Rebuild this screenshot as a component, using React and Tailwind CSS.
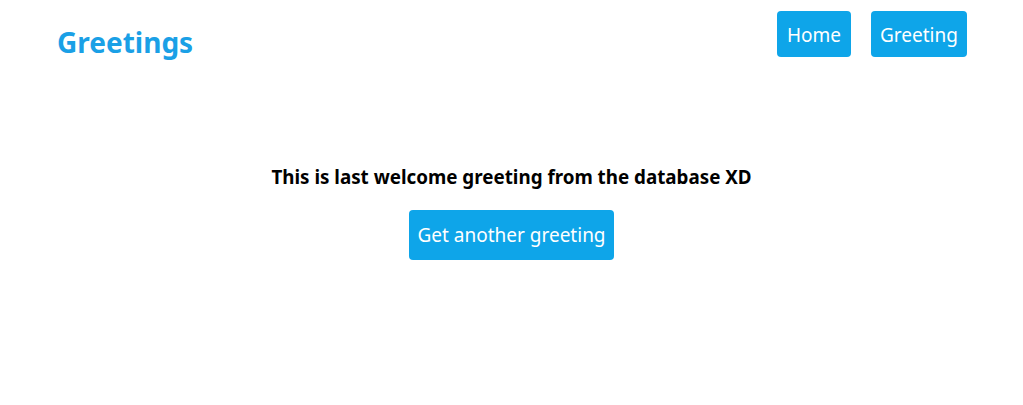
import React, { useState } from 'react';

const greetings = [
  'This is last welcome greeting from the database XD',
];

export default function App() {
  const [idx, setIdx] = useState(0);

  return (
    <div className="min-h-screen bg-white font-['Noto_Sans',sans-serif]">
      <header className="flex items-start justify-between pl-[57px] pr-[56px] pt-[11px]">
        <h1 className="mt-[14px] text-[28px] font-bold leading-[34px] text-[#1aa0e6]">Greetings</h1>
        <nav className="flex gap-5">
          <button className="h-[46px] w-[74px] rounded-[4px] bg-[#0ea5e9] pt-[3px] text-[19px] text-white">Home</button>
          <button className="h-[46px] w-[96px] rounded-[4px] bg-[#0ea5e9] pt-[3px] text-[19px] text-white">Greeting</button>
        </nav>
      </header>

      <main className="mt-[104px] flex flex-col items-center">
        <p className="text-[18.8px] font-bold leading-[28px] text-black">{greetings[idx % greetings.length]}</p>
        <button
          onClick={() => setIdx((i) => i + 1)}
          className="mt-[19px] h-[50px] w-[205px] rounded-[4px] bg-[#0ea5e9] pt-[1px] text-[19px] text-white"
        >
          Get another greeting
        </button>
      </main>
    </div>
  );
}
